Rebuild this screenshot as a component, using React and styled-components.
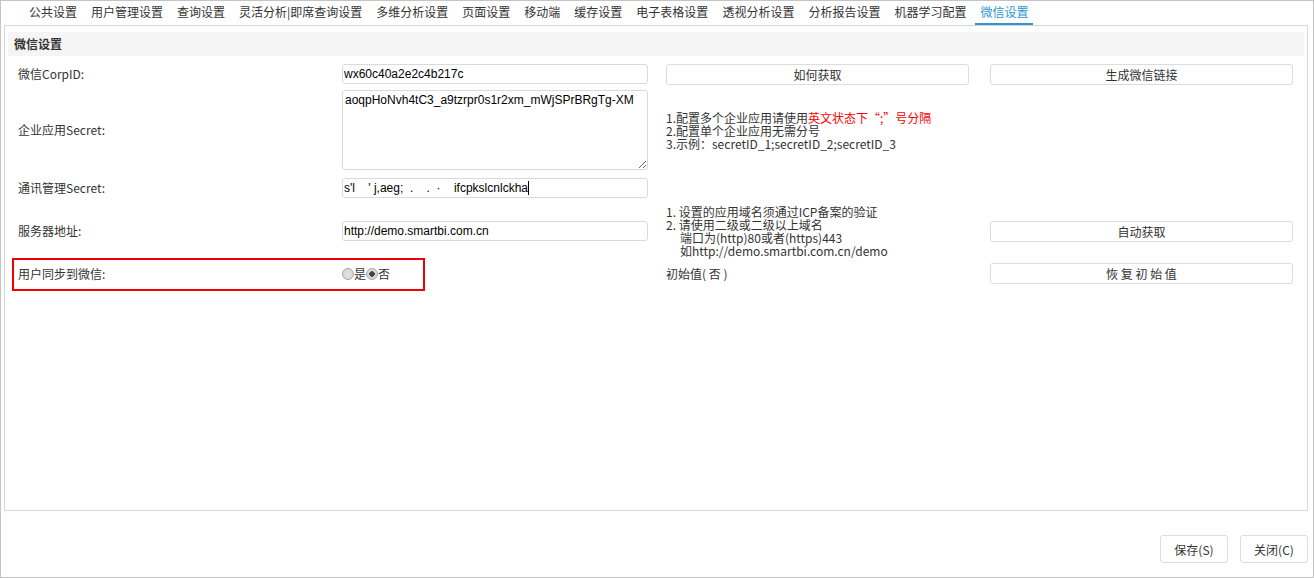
import React from 'react';
import styled, { createGlobalStyle } from 'styled-components';

const CJK = `"Noto Sans CJK SC", "Microsoft YaHei", sans-serif`;
const LATIN = `"Liberation Sans", Arial, "Noto Sans CJK SC", sans-serif`;

const TABS = [
  '公共设置', '用户管理设置', '查询设置', '灵活分析|即席查询设置', '多维分析设置', '页面设置',
  '移动端', '缓存设置', '电子表格设置', '透视分析设置', '分析报告设置', '机器学习配置', '微信设置',
];

const App = () => (
  <Frame>
    <GlobalStyle />
    <TabBar>
      {TABS.map((t) => (
        <Tab key={t} $active={t === '微信设置'}>{t}</Tab>
      ))}
    </TabBar>
    <Panel>
      <SectionHeader>微信设置</SectionHeader>
      <Form>
        <Row $h={24} $mt={0}>
          <Label>微信CorpID:</Label>
          <TextBox>wx60c40a2e2c4b217c</TextBox>
          <Cell><Button>如何获取</Button></Cell>
          <Cell><Button>生成微信链接</Button></Cell>
        </Row>

        <Row $h={84} $mt={2}>
          <Label>企业应用Secret:</Label>
          <TextArea readOnly defaultValue="aoqpHoNvh4tC3_a9tzrpr0s1r2xm_mWjSPrBRgTg-XM" />
          <Help>
            <div>1.配置多个企业应用请使用<Warn>英文状态下“;”号分隔</Warn></div>
            <div>2.配置单个企业应用无需分号</div>
            <div>3.示例：secretID_1;secretID_2;secretID_3</div>
          </Help>
        </Row>

        <Row $h={24} $mt={4}>
          <Label>通讯管理Secret:</Label>
          <TextBox>{"s'l    ' j,aeg;  .    .  ·    ifcpkslcnlckha"}<Caret /></TextBox>
        </Row>

        <Row $h={56} $mt={3}>
          <Label>服务器地址:</Label>
          <TextBox>http://demo.smartbi.com.cn</TextBox>
          <Help>
            <div>1. 设置的应用域名须通过ICP备案的验证</div>
            <div>2. 请使用二级或二级以上域名</div>
            <Indent>端口为(http)80或者(https)443</Indent>
            <Indent>如http://demo.smartbi.com.cn/demo</Indent>
          </Help>
          <Cell><Button>自动获取</Button></Cell>
        </Row>

        <Row $h={23} $mt={3}>
          <Highlight />
          <Label>用户同步到微信:</Label>
          <RadioGroup>
            <Radio />是<Radio $checked />否
          </RadioGroup>
          <Help>初始值( 否 )</Help>
          <Cell><Button>恢 复 初 始 值</Button></Cell>
        </Row>
      </Form>
    </Panel>
    <Footer>
      <FooterButton>保存(S)</FooterButton>
      <FooterButton>关闭(C)</FooterButton>
    </Footer>
  </Frame>
);

export default App;


const GlobalStyle = createGlobalStyle`
  html, body {
    margin: 0;
    padding: 0;
    background: #fff;
  }
  body {
    font-family: ${CJK};
    font-size: 12px;
    color: #333;
  }
`;

const Frame = styled.div`
  box-sizing: border-box;
  width: 1314px;
  height: 578px;
  border: 1px solid #c4c4c4;
  padding: 0 5px 0 3px;
  display: flex;
  flex-direction: column;
  background: #fff;
`;

const TabBar = styled.div`
  display: flex;
  height: 24px;
  padding-left: 18px;
`;

const Tab = styled.div`
  margin: 0 2px;
  padding: 0 5px;
  line-height: 22px;
  height: 22px;
  white-space: nowrap;
  color: ${(p) => (p.$active ? '#2d97cf' : '#333')};
  border-bottom: 2px solid ${(p) => (p.$active ? '#2d97cf' : 'transparent')};
`;

const Panel = styled.div`
  box-sizing: border-box;
  height: 486px;
  border: 1px solid #d6d6d6;
  padding: 6px 3px 0 3px;
`;

const SectionHeader = styled.div`
  height: 24px;
  line-height: 24px;
  background: #f5f5f5;
  padding-left: 6px;
  font-weight: bold;
  color: #333;
`;

const Form = styled.div`
  margin-top: 6px;
  display: flex;
  flex-direction: column;
`;

const Row = styled.div`
  position: relative;
  display: grid;
  grid-template-columns: 334px 324px 324px 303px;
  align-items: center;
  height: ${(p) => p.$h}px;
  margin-top: ${(p) => p.$mt}px;
`;

const Label = styled.div`
  padding-left: 10px;
  color: #333;
  line-height: 16px;
`;

const Cell = styled.div`
  display: flex;
`;

const TextBox = styled.div`
  box-sizing: border-box;
  width: 306px;
  height: 20px;
  border: 1px solid #dadada;
  border-radius: 3px;
  padding: 0 1px;
  font-family: ${LATIN};
  font-size: 12px;
  line-height: 18px;
  color: #000;
  white-space: pre;
  overflow: hidden;
  display: flex;
  align-items: center;
`;

const Caret = styled.span`
  display: inline-block;
  width: 1px;
  height: 14px;
  background: #000;
`;

const TextArea = styled.textarea`
  box-sizing: border-box;
  width: 306px;
  height: 80px;
  margin: 0;
  border: 1px solid #dadada;
  border-radius: 3px;
  padding: 2px 2px;
  font-family: ${LATIN};
  font-size: 12px;
  line-height: 14px;
  color: #000;
  outline: none;
`;

const Help = styled.div`
  color: #333;
  line-height: 13px;
  white-space: nowrap;
`;

const Indent = styled.div`
  padding-left: 14px;
`;

const Warn = styled.span`
  color: #ff0000;
`;

const Button = styled.div`
  box-sizing: border-box;
  width: 303px;
  height: 21px;
  border: 1px solid #dcdcdc;
  border-radius: 3px;
  background: #fff;
  display: flex;
  align-items: center;
  justify-content: center;
  color: #333;
`;

const RadioGroup = styled.div`
  display: flex;
  align-items: center;
  color: #333;
  line-height: 16px;
`;

const Radio = styled.span`
  box-sizing: border-box;
  display: inline-block;
  width: 12px;
  height: 12px;
  border-radius: 50%;
  border: 1px solid #a9a9a9;
  background: radial-gradient(circle, ${(p) => (p.$checked ? '#444 0, #444 2.5px, #dcdcdc 3px' : '#e4e4e4 0')}, #d2d2d2 100%);
`;

const Highlight = styled.div`
  position: absolute;
  left: 4px;
  top: -4px;
  width: 413px;
  height: 33px;
  box-sizing: border-box;
  border: 2px solid #f00000;
  pointer-events: none;
`;

const Footer = styled.div`
  display: flex;
  justify-content: flex-end;
  gap: 12px;
  padding-top: 24px;
`;

const FooterButton = styled.div`
  box-sizing: border-box;
  width: 68px;
  height: 28px;
  border: 1px solid #dcdcdc;
  border-radius: 3px;
  display: flex;
  align-items: center;
  justify-content: center;
  color: #333;
`;
